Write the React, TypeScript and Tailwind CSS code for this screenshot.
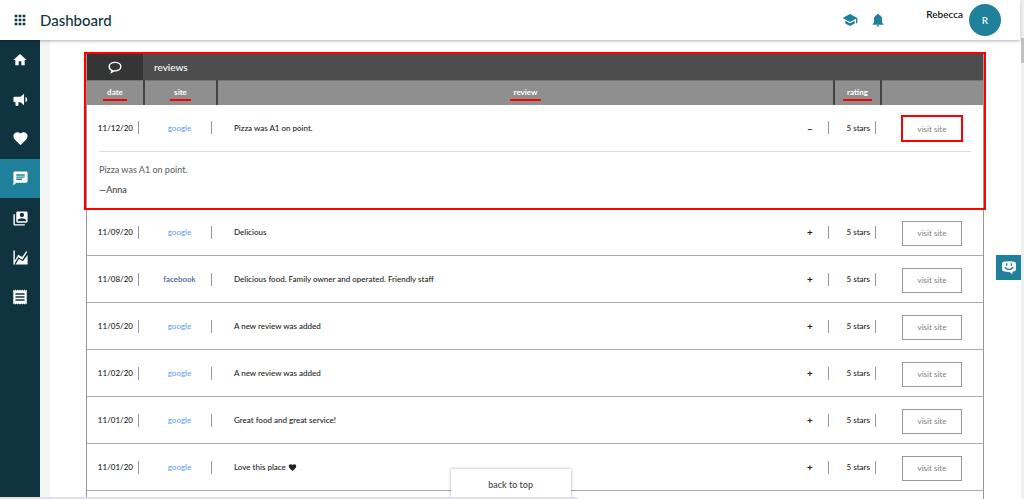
import type { ReactNode } from "react";
import {
  MdApps,
  MdChat,
  MdFavorite,
  MdHome,
  MdNotifications,
  MdReceipt,
  MdSchool,
} from "react-icons/md";

type Review = {
  date: string;
  site: "google" | "facebook";
  text: string;
  loved?: boolean;
  rating: string;
  author?: string;
};

const reviews: Review[] = [
  { date: "11/12/20", site: "google", text: "Pizza was A1 on point.", rating: "5 stars", author: "Anna" },
  { date: "11/09/20", site: "google", text: "Delicious", rating: "5 stars" },
  { date: "11/08/20", site: "facebook", text: "Delicious food. Family owner and operated. Friendly staff", rating: "5 stars" },
  { date: "11/05/20", site: "google", text: "A new review was added", rating: "5 stars" },
  { date: "11/02/20", site: "google", text: "A new review was added", rating: "5 stars" },
  { date: "11/01/20", site: "google", text: "Great food and great service!", rating: "5 stars" },
  { date: "11/01/20", site: "google", text: "Love this place", loved: true, rating: "5 stars" },
];

function PathIcon({ d, className }: { d: string; className?: string }) {
  return (
    <svg viewBox="0 0 24 24" fill="currentColor" aria-hidden="true" className={className}>
      <path fillRule="evenodd" d={d} />
    </svg>
  );
}

const bullhorn =
  "M12 8H4a2 2 0 0 0-2 2v4a2 2 0 0 0 2 2h1v4a1 1 0 0 0 1 1h2a1 1 0 0 0 1-1v-4h3l5 4V4l-5 4M21.5 12c0 1.71-.96 3.26-2.5 4V8c1.53.75 2.5 2.3 2.5 4Z";
const contacts =
  "M4 6H2v14c0 1.1.9 2 2 2h14v-2H4V6zm16-4H8c-1.1 0-2 .9-2 2v12c0 1.1.9 2 2 2h12c1.1 0 2-.9 2-2V4c0-1.1-.9-2-2-2zm-6 2c1.66 0 3 1.34 3 3s-1.34 3-3 3-3-1.34-3-3 1.34-3 3-3zm6 12H8v-1.5c0-1.99 4-3 6-3s6 1.01 6 3V16z";
const chartLine =
  "M2 2h2v14.200l4.700-8.200 5.800 3.400L19.900 3l1.700 1-7 11.200-5.800-3.400L4 20V22H2V2z";
const chartArea = "M22 8.500V22H5L9.700 14l5.600 3.300L22 8.500z";

const navItems: { label: string; icon: ReactNode; active?: boolean }[] = [
  { label: "Home", icon: <MdHome className="size-4" /> },
  { label: "Campaigns", icon: <PathIcon d={bullhorn} className="size-[17px]" /> },
  { label: "Loyalty", icon: <MdFavorite className="size-[17px]" /> },
  { label: "Reviews", icon: <MdChat className="size-[17px]" />, active: true },
  { label: "Contacts", icon: <PathIcon d={contacts} className="size-[17px]" /> },
  { label: "Analytics", icon: <PathIcon d={chartLine + chartArea} className="size-[17px]" /> },
  { label: "Receipts", icon: <MdReceipt className="size-[18px]" /> },
];

function Header() {
  return (
    <header className="relative z-20 mr-1 flex h-10 items-center bg-white pl-3 pr-[19px] shadow-[0_1px_3px_rgba(0,0,0,0.3)]">
      <button type="button" aria-label="Apps" className="text-[#12353f]">
        <MdApps className="size-4" />
      </button>
      <h1 className="ml-3 text-[15px] font-medium text-[#12353f]">Dashboard</h1>
      <div className="ml-auto flex items-center text-[#1f809b]">
        <button type="button" aria-label="Learn">
          <MdSchool className="size-4" />
        </button>
        <button type="button" aria-label="Notifications" className="ml-3">
          <MdNotifications className="size-4" />
        </button>
        <span className="mb-3 ml-10 text-[10px] font-medium text-black">Rebecca</span>
        <span className="ml-1.5 flex size-8 items-center justify-center rounded-full bg-[#1f809b] text-[10px] font-medium text-white">
          R
        </span>
      </div>
    </header>
  );
}

function Sidebar() {
  return (
    <aside className="w-10 shrink-0 bg-[#10343f]">
      <nav className="flex h-[277px] flex-col">
        {navItems.map((item) => (
          <a
            key={item.label}
            href="#"
            aria-label={item.label}
            className={
              item.active
                ? "flex flex-1 items-center justify-center bg-[#1f809b] text-white"
                : "flex flex-1 items-center justify-center text-white"
            }
          >
            {item.icon}
          </a>
        ))}
      </nav>
    </aside>
  );
}

function ColumnHead({ children }: { children: ReactNode }) {
  return (
    <th className="border-r-2 border-[#444] p-0 text-center font-bold">
      <span className="inline-block border-b-2 border-[#ff0000] px-1 leading-[14px]">
        {children}
      </span>
    </th>
  );
}

function ReviewRows({ review }: { review: Review }) {
  const open = Boolean(review.author);

  return (
    <>
      <tr className={open ? "h-[46px]" : "h-[47px] border-b border-[#aaa]"}>
        <td className="p-0 pr-[5px]">
          <div className="flex h-[13px] items-center justify-end border-r border-[#999] pr-[5px]">
            {review.date}
          </div>
        </td>
        <td className="p-0 pr-[5px]">
          <div
            className={
              review.site === "google"
                ? "flex h-[13px] items-center justify-center border-r border-[#999] pl-1 text-[#6b9ff0]"
                : "flex h-[13px] items-center justify-center border-r border-[#999] pl-1 text-[#3b5998]"
            }
          >
            {review.site}
          </div>
        </td>
        <td className="p-0 pl-[17px] pr-[5px]">
          <div className="flex h-[13px] items-center border-r border-[#999] pr-3">
            <span>{review.text}</span>
            {review.loved && <MdFavorite className="ml-0.5 size-[9px]" />}
            <button type="button" aria-expanded={open} className="ml-auto w-3 text-[10px] font-bold leading-3">
              {open ? "–" : "+"}
            </button>
          </div>
        </td>
        <td className="p-0 pr-[5px]">
          <div className="flex h-[13px] items-center justify-end border-r border-[#999] pr-[5px]">
            {review.rating}
          </div>
        </td>
        <td className="p-0 pt-0.5 text-center">
          <button
            type="button"
            className={
              open
                ? "h-[27px] w-[62px] border-2 border-[#ff0000] text-[#888]"
                : "h-[25px] w-[60px] border border-[#999] text-[#888]"
            }
          >
            visit site
          </button>
        </td>
      </tr>
      {open && (
        <tr className="h-[58px] border-b border-[#aaa]">
          <td colSpan={5} className="px-3 py-0 align-top text-[9px] leading-5">
            <div className="border-t border-[#ddd] pt-2">
              <p className="text-[#666]">{review.text}</p>
              <p className="text-[#444]">—{review.author}</p>
            </div>
          </td>
        </tr>
      )}
    </>
  );
}

function ReviewsPanel() {
  return (
    <section className="relative min-h-full border-x border-[#999] text-[8px] font-medium text-[#222]">
      <div className="flex h-[26px] bg-[#4d4d4d] text-white">
        <div className="flex w-[56px] items-center justify-center bg-[#353535]">
          <svg viewBox="0 0 24 24" fill="none" stroke="currentColor" strokeWidth="2.4" aria-hidden="true" className="size-3.5">
            <path d="M7 18.2C3.8 16.7 2 14.200 2 11.300 2 7 6.500 4 12 4s10 3 10 7.300-4.500 7.300-10 7.300c-.6 0-1.200 0-1.700-.1L6 21Z" />
          </svg>
        </div>
        <h2 className="flex items-center pl-[11px] text-[10px]">reviews</h2>
      </div>
      <table className="w-full table-fixed border-collapse">
        <colgroup>
          <col className="w-[57px]" />
          <col className="w-[73px]" />
          <col />
          <col className="w-[47px]" />
          <col className="w-[102px]" />
        </colgroup>
        <thead>
          <tr className="h-6 border-t border-[#777] bg-[#8f8f8f] text-white">
            <ColumnHead>date</ColumnHead>
            <ColumnHead>site</ColumnHead>
            <ColumnHead>review</ColumnHead>
            <ColumnHead>rating</ColumnHead>
            <th className="p-0" aria-label="link" />
          </tr>
        </thead>
        <tbody>
          {reviews.map((review, index) => (
            <ReviewRows key={index} review={review} />
          ))}
        </tbody>
      </table>
      {/* highlight round the headings and the open review */}
      <div className="pointer-events-none absolute -inset-x-[3px] -top-0.5 h-[158px] border-2 border-[#ff0000]" />
    </section>
  );
}

export default function App() {
  return (
    <div className="relative flex h-screen flex-col overflow-hidden bg-white font-['Lato',sans-serif]">
      <Header />
      <div className="flex min-h-0 flex-1">
        <Sidebar />
        <main className="min-w-0 flex-1 overflow-hidden border-l-10 border-[#f4f6f6] pl-9 pr-10 pt-[14px]">
          <ReviewsPanel />
        </main>
      </div>

      <div className="absolute inset-y-0 right-0 w-[3px] bg-[#f0f0f0]">
        <div className="mt-[38px] h-[25px] bg-[#c1c1c1]" />
      </div>
      <button
        type="button"
        aria-label="Chat with us"
        className="absolute right-[3px] top-[255px] flex h-[25px] w-[25px] items-center justify-center bg-[#1f809b] text-white"
      >
        <svg viewBox="0 0 24 24" aria-hidden="true" className="size-4">
          <path
            fill="currentColor"
            d="M4 2.500Q12 1 20 2.500 22 3 22.300 5 23 10 22.300 14.500 22 16.500 20 17L17.500 17.400 17 21.500 12.500 18Q8 18 4 17 2 16.500 1.700 14.500 1 10 1.700 5 2 3 4 2.500Z"
          />
          <path
            fill="none"
            stroke="#1f809b"
            strokeWidth="2"
            d="M8.500 5v3.500M15.500 5v3.500M6 10.500q1 3.500 6 3.500t6-3.500"
          />
        </svg>
      </button>
      <button
        type="button"
        className="absolute bottom-0.5 left-[44%] h-7 w-[120px] bg-white pt-1 text-[9px] font-medium text-[#444] shadow-[0_0_3px_rgba(0,0,0,0.35)]"
      >
        back to top
      </button>
      <div className="absolute bottom-0 left-0 h-0.5 w-[578px] rounded-tr-sm bg-[#dee1e6]" />
    </div>
  );
}
